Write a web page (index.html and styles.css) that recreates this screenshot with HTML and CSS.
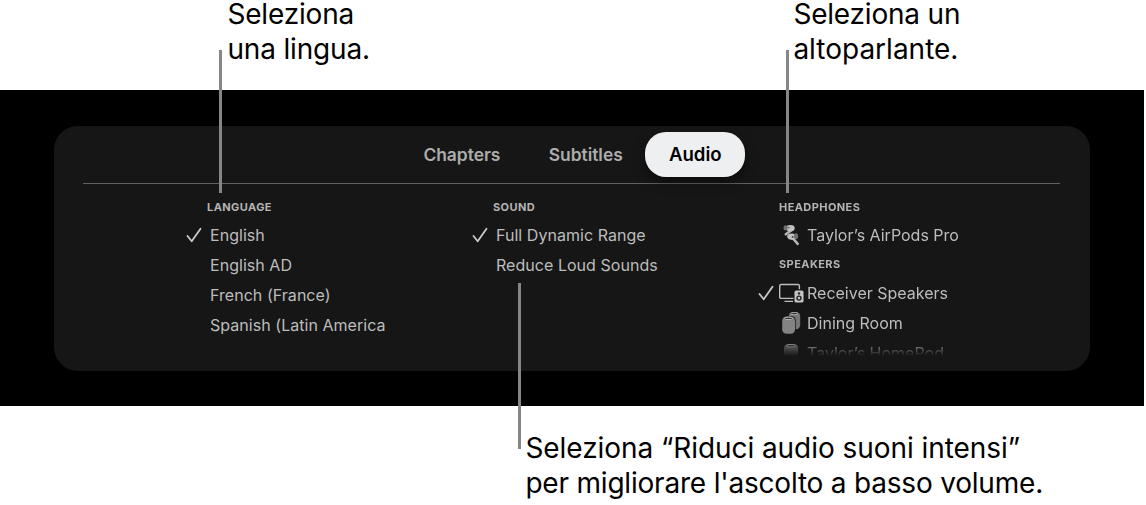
FILE: index.html
```
<!DOCTYPE html>
<html lang="it">
<head>
<meta charset="UTF-8">
<title>Audio</title>
<link rel="stylesheet" href="styles.css">
</head>
<body>

<div class="figure">
    <div class="captions">
        <p class="caption caption-language">Seleziona<br>una lingua.</p>
        <p class="caption caption-speaker"><span class="tight">Seleziona un</span><br>altoparlante.</p>
    </div>

    <div class="screen">
        <div class="panel">
            <div class="tabs">
                <div class="tab tab-chapters">Chapters</div>
                <div class="tab tab-subtitles">Subtitles</div>
                <div class="tab selected">Audio</div>
            </div>
            <div class="columns">
                <div class="column">
                    <h2>Language</h2>
                    <div class="item"><svg class="check" viewBox="0 0 16 16"><path d="M1.5 9 L5.7 14.3 L14.5 1.7"/></svg><span class="name">English</span></div>
                    <div class="item"><span class="name">English AD</span></div>
                    <div class="item"><span class="name">French (France)</span></div>
                    <div class="item"><span class="name cut">Spanish (Latin America)</span></div>
                </div>
                <div class="column">
                    <h2>Sound</h2>
                    <div class="item"><svg class="check" viewBox="0 0 16 16"><path d="M1.5 9 L5.7 14.3 L14.5 1.7"/></svg><span class="name">Full Dynamic Range</span></div>
                    <div class="item"><span class="name">Reduce Loud Sounds</span></div>
                </div>
                <div class="column outputs">
                    <h2>Headphones</h2>
                    <div class="item">
                        <svg class="icon" viewBox="0 0 28 24">
                            <path d="M13.5 6.5 L6.8 11.3" stroke="#b5b5b5" stroke-width="2.6" stroke-linecap="round"/>
                            <ellipse cx="11.3" cy="5.2" rx="4.4" ry="3.1" fill="#c0c0c0"/>
                            <ellipse cx="6.6" cy="4.9" rx="2.1" ry="2.7" fill="#6f6f6f"/>
                            <path d="M11 14 L14.5 16 L18.7 20.8" fill="none" stroke="#b5b5b5" stroke-width="2.6" stroke-linecap="round"/>
                            <ellipse cx="12.6" cy="13.6" rx="4.4" ry="3.1" fill="#c0c0c0"/>
                            <ellipse cx="17" cy="13.2" rx="2.1" ry="2.9" fill="#6f6f6f"/>
                            <circle cx="13.6" cy="14" r="0.9" fill="#444"/>
                            <circle cx="9.8" cy="4.6" r="0.8" fill="#555"/>
                        </svg>
                        <span class="name">Taylor’s AirPods Pro</span>
                    </div>
                    <h2 class="second">Speakers</h2>
                    <div class="item">
                        <svg class="check" viewBox="0 0 16 16"><path d="M1.5 9 L5.7 14.3 L14.5 1.7"/></svg>
                        <svg class="icon" viewBox="0 0 28 24">
                            <path d="M14.5 17.4 H2.2 Q0.7 17.4 0.7 15.9 V5 Q0.7 3.5 2.2 3.5 H18.9 Q20.4 3.5 20.4 5 V8.3 M5.5 20.4 H14" fill="none" stroke="#bebebe" stroke-width="1.4"/>
                            <rect x="15.5" y="9.6" width="9" height="12" rx="1.6" fill="#c4c4c4"/>
                            <circle cx="20" cy="12.4" r="1.2" fill="#222"/>
                            <circle cx="20" cy="17.1" r="2" fill="none" stroke="#222" stroke-width="1.4"/>
                        </svg>
                        <span class="name">Receiver Speakers</span>
                    </div>
                    <div class="item">
                        <svg class="icon" viewBox="0 0 28 24">
                            <rect x="9.8" y="1" width="11.4" height="17.3" rx="4.2" fill="#777"/>
                            <ellipse cx="15.4" cy="2.6" rx="3.6" ry="1.1" fill="#303030" stroke="#bbb" stroke-width="0.8"/>
                            <rect x="2.7" y="5" width="14" height="18" rx="4.6" fill="#161616"/>
                            <rect x="3.2" y="5.6" width="12.8" height="17.2" rx="4.3" fill="#838383"/>
                            <ellipse cx="9.6" cy="7.4" rx="4" ry="1.2" fill="#303030" stroke="#ccc" stroke-width="0.8"/>
                        </svg>
                        <span class="name">Dining Room</span>
                    </div>
                    <div class="item">
                        <svg class="icon" viewBox="0 0 28 24">
                            <rect x="5" y="3" width="14.2" height="19" rx="4.5" fill="#838383"/>
                            <ellipse cx="12.1" cy="4.7" rx="4.4" ry="1.2" fill="#303030" stroke="#ccc" stroke-width="0.9"/>
                        </svg>
                        <span class="name">Taylor’s HomePod</span>
                    </div>
                </div>
            </div>
        </div>
    </div>

    <p class="caption caption-sound">Seleziona “Riduci audio suoni intensi”<br><span class="tight">per migliorare l'ascolto a basso volume.</span></p>

    <!-- leader lines from the captions to the menu -->
    <div class="leader leader-language"></div>
    <div class="leader leader-speaker"></div>
    <div class="leader leader-sound"></div>
</div>

</body>
</html>
```
FILE: styles.css
```
body {
    margin: 0;
    background: white;
    color: black;
    font-family: Inter, "Liberation Sans", sans-serif;
}

.figure {
    position: relative;
    width: 1146px;
    height: 505px;
}

.captions {
    display: grid;
    grid-template-columns: 566px 1fr;
    height: 90px;
    padding-left: 227.4px;
}

.caption {
    margin: -3px 0 0;
    font-size: 28px;
    line-height: 35px;
    white-space: nowrap;
}

.caption-language {
    letter-spacing: -0.17px;
}

.caption-sound {
    margin: 25px 0 0 525.4px;
    letter-spacing: -0.06px;
}

.tight {
    letter-spacing: -0.2px;
}

.screen {
    box-sizing: border-box;
    width: 1143.5px;
    height: 315.5px;
    padding: 36px 53.5px 35px;
    background: black;
}

.panel {
    box-sizing: border-box;
    height: 245px;
    padding: 6px 30px 0;
    border-radius: 24px;
    background: #161616;
    color: #bdbdbd;
}

.tabs {
    display: flex;
    height: 51px;
    margin-left: -0.5px;
    padding-left: 340.4px;
    border-bottom: 1px solid #626262;
}

.tab {
    height: 45px;
    line-height: 45px;
    font-size: 17.4px;
    font-weight: 600;
    color: #adadad;
}

.tab-chapters {
    width: 125.3px;
}

.tab-subtitles {
    width: 96.8px;
}

.tab.selected {
    width: 99.5px;
    border-radius: 21px;
    background: #eeeff1;
    color: black;
    font-size: 18.6px;
    text-align: center;
    box-shadow: 0 5px 12px rgba(0, 0, 0, 0.5);
}

.columns {
    display: grid;
    grid-template-columns: 200px 200px 220px;
    column-gap: 86px;
    padding: 9px 0 0 102.5px;
}

.column {
    height: 164px;
    overflow: hidden;
}

.outputs {
    -webkit-mask-image: linear-gradient(black 146px, transparent 163px);
    mask-image: linear-gradient(black 146px, transparent 163px);
}

h2 {
    margin: 0;
    padding-left: 21px;
    height: 27.5px;
    line-height: 28px;
    font-size: 11px;
    font-weight: 700;
    letter-spacing: 0.42px;
    text-transform: uppercase;
    color: #b4b4b4;
}

h2.second {
    height: 28.2px;
    line-height: 29px;
}

.item {
    display: flex;
    align-items: center;
    height: 29.8px;
    padding-left: 24px;
    font-size: 16px;
    line-height: 20px;
    letter-spacing: 0.04px;
    white-space: nowrap;
}

.check {
    flex: none;
    width: 16px;
    height: 16px;
    margin: 0 8px 0 -24px;
    fill: none;
    stroke: #c9c9c9;
    stroke-width: 1.8;
    stroke-linecap: round;
    stroke-linejoin: round;
}

.outputs .item {
    padding-left: 21px;
    letter-spacing: 0;
}

.outputs .check {
    margin: 0 5px 0 -21px;
}

.icon {
    flex: none;
    width: 28px;
    height: 24px;
}

.cut {
    width: 176px;
    overflow: hidden;
}

.leader {
    position: absolute;
    width: 3px;
    background: #868686;
}

.leader-language {
    left: 219px;
    top: 50px;
    height: 143px;
}

.leader-speaker {
    left: 785.5px;
    top: 50px;
    height: 143px;
}

.leader-sound {
    left: 517.5px;
    top: 283px;
    height: 166px;
}
```
